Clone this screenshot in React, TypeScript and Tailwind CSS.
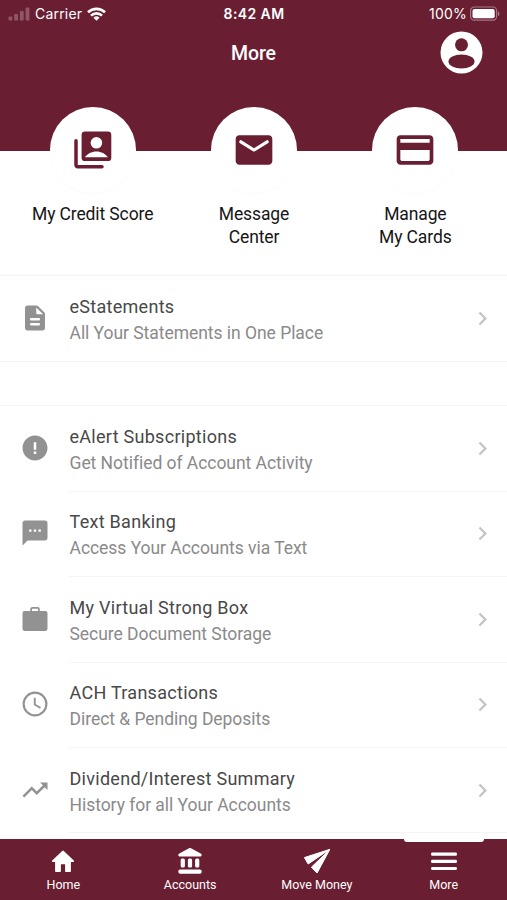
import type { ReactNode } from "react";

interface Shortcut {
  label: string[];
  icon: ReactNode;
}

interface MenuItem {
  title: string;
  subtitle: string;
  icon: ReactNode;
}

interface Tab {
  label: string;
  icon: ReactNode;
  active?: boolean;
}

const shortcuts: Shortcut[] = [
  {
    label: ["My Credit Score"],
    icon: (
      <svg width="44" height="44" viewBox="0 0 44 44" fill="currentColor">
        <path
          fillRule="evenodd"
          d="M14 3.500h22.900a3.400 3.400 0 0 1 3.400 3.400v22.800a3.400 3.400 0 0 1-3.400 3.400H14a3.400 3.400 0 0 1-3.400-3.400V6.900A3.400 3.400 0 0 1 14 3.500zM25.400 9a5.800 5.800 0 1 0 0 11.600 5.800 5.800 0 0 0 0-11.600zM14 29.300h22.800c-2.200-3.700-6.600-5.900-11.400-5.900s-9.200 2.200-11.400 5.900z"
        />
        <path
          d="M5 12.800v24.300a1.700 1.700 0 0 0 1.700 1.700H31"
          fill="none"
          stroke="currentColor"
          strokeWidth="3.500"
          strokeLinecap="round"
        />
      </svg>
    ),
  },
  {
    label: ["Message", "Center"],
    icon: (
      <svg width="44" height="44" viewBox="0 0 24 24" fill="currentColor">
        <path d="M20 4H4c-1.100 0-1.990.9-1.990 2L2 18c0 1.100.9 2 2 2h16c1.100 0 2-.9 2-2V6c0-1.100-.9-2-2-2zm-.4 4.250l-7.070 4.420c-.320.200-.740.200-1.060 0L4.400 8.250a.850.850 0 1 1 .9-1.440L12 11l6.700-4.190a.850.850 0 1 1 .9 1.440z" />
      </svg>
    ),
  },
  {
    label: ["Manage", "My Cards"],
    icon: (
      <svg width="44" height="44" viewBox="0 0 24 24" fill="currentColor">
        <path d="M20 4H4c-1.110 0-1.990.890-1.990 2L2 18c0 1.110.890 2 2 2h16c1.110 0 2-.890 2-2V6c0-1.110-.890-2-2-2zm-1 14H5c-.550 0-1-.450-1-1v-5h16v5c0 .550-.450 1-1 1zm1-10H4V6h16v2z" />
      </svg>
    ),
  },
];

const GlyphIcon = ({ d, size = 30 }: { d: string; size?: number }) => (
  <svg width={size} height={size} viewBox="0 0 24 24" fill="currentColor">
    <path d={d} />
  </svg>
);

const statements: MenuItem[] = [
  {
    title: "eStatements",
    subtitle: "All Your Statements in One Place",
    icon: (
      <GlyphIcon d="M14.590 2.590c-.380-.380-.890-.590-1.420-.590H6c-1.100 0-2 .9-2 2v16c0 1.100.890 2 1.990 2H18c1.100 0 2-.9 2-2V8.830c0-.530-.210-1.040-.590-1.410l-4.820-4.830zM15 18H9c-.550 0-1-.450-1-1s.450-1 1-1h6c.550 0 1 .450 1 1s-.450 1-1 1zm0-4H9c-.550 0-1-.450-1-1s.450-1 1-1h6c.550 0 1 .450 1 1s-.450 1-1 1zm-2-6V3.500L18.500 9H14c-.550 0-1-.450-1-1z" />
    ),
  },
];

const services: MenuItem[] = [
  {
    title: "eAlert Subscriptions",
    subtitle: "Get Notified of Account Activity",
    icon: (
      <GlyphIcon d="M12 2C6.480 2 2 6.480 2 12s4.480 10 10 10 10-4.480 10-10S17.520 2 12 2zm1 14.700h-2v-2h2v2zm0-3.300h-2V7.300h2v6.100z" />
    ),
  },
  {
    title: "Text Banking",
    subtitle: "Access Your Accounts via Text",
    icon: (
      <GlyphIcon d="M20 2H4c-1.100 0-2 .9-2 2v18l4-4h14c1.100 0 2-.9 2-2V4c0-1.100-.9-2-2-2zM9.200 11H7.300V9.100h1.900V11zm3.750 0h-1.900V9.100h1.900V11zm3.750 0h-1.900V9.100h1.900V11z" />
    ),
  },
  {
    title: "My Virtual Strong Box",
    subtitle: "Secure Document Storage",
    icon: (
      <GlyphIcon d="M20.300 5.600h-4.500V4.200c0-1.100-.7-1.800-1.700-1.800H9.900c-1 0-1.700.7-1.700 1.800v1.400H3.700c-1 0-1.700.7-1.700 1.700v12.500c0 1 .7 1.700 1.700 1.700h16.600c1 0 1.700-.7 1.700-1.700V7.300c0-1-.7-1.700-1.700-1.700zm-5.900 0H9.600V4.300c0-.3.200-.5.500-.5h3.800c.3 0 .5.200.5.500v1.300z" />
    ),
  },
  {
    title: "ACH Transactions",
    subtitle: "Direct & Pending Deposits",
    icon: (
      <svg width="30" height="30" viewBox="0 0 24 24" fill="none" stroke="currentColor" strokeWidth="1.700">
        <circle cx="12" cy="12" r="9.100" />
        <path d="M11.800 7v5.400l4.600 2.800" strokeWidth="1.500" />
      </svg>
    ),
  },
  {
    title: "Dividend/Interest Summary",
    subtitle: "History for all Your Accounts",
    icon: (
      <GlyphIcon d="M16 6l2.290 2.290-4.880 4.880-4-4L2 16.590 3.410 18l6-6 4 4 6.300-6.290L22 12V6z" />
    ),
  },
];

const tabs: Tab[] = [
  {
    label: "Home",
    icon: (
      <svg width="28" height="28" viewBox="0 0 28 28" fill="currentColor">
        <path d="M11.900 24v-6.800h4.200V24c0 .6.400 1 1 1h3.800c.6 0 1-.4 1-1v-9h2.300c.8 0 1.200-1 .6-1.500L14.800 3.900a1.200 1.200 0 0 0-1.600 0L3.200 13.500c-.6.500-.2 1.500.6 1.500h2.300v9c0 .6.400 1 1 1h3.800c.6 0 1-.4 1-1z" />
      </svg>
    ),
  },
  {
    label: "Accounts",
    icon: (
      <svg width="28" height="28" viewBox="0 0 28 28" fill="currentColor">
        <path d="M13 1.300L3.300 6.400c-1.700.9-1.100 3.100.8 3.100h19.800c1.900 0 2.500-2.200.8-3.100L15 1.300a2.200 2.200 0 0 0-2 0z" />
        <rect x="4.700" y="11.500" width="4.200" height="9" rx="1.500" />
        <rect x="11.900" y="11.500" width="4.200" height="9" rx="1.500" />
        <rect x="19.100" y="11.500" width="4.200" height="9" rx="1.500" />
        <rect x="2.300" y="22.500" width="23.400" height="4.200" rx="1.900" />
      </svg>
    ),
  },
  {
    label: "Move Money",
    icon: (
      <svg width="28" height="28" viewBox="0 0 28 28" fill="currentColor" stroke="currentColor" strokeWidth="1" strokeLinejoin="round">
        <path d="M1.400 10.600L26.600 2.400 5.200 17z" />
        <path d="M26.700 2.600L8.400 20.200l5.700 5.800z" />
      </svg>
    ),
  },
  {
    label: "More",
    active: true,
    icon: (
      <svg width="28" height="28" viewBox="0 0 28 28" fill="currentColor">
        <rect x="1.100" y="5.500" width="25.800" height="3.200" rx="1" />
        <rect x="1.100" y="12.700" width="25.800" height="3.200" rx="1" />
        <rect x="1.100" y="19.900" width="25.800" height="3.200" rx="1" />
      </svg>
    ),
  },
];

const StatusBar = () => (
  <div className="grid h-[28px] grid-cols-3 items-center pl-[8px] pr-[7px] font-['Inter',sans-serif] text-[14px] leading-none">
    <div className="flex items-center">
      <svg width="22" height="14" viewBox="0 0 22 14" fill="currentColor" className="opacity-25">
        <rect x="0.500" y="9.500" width="3.800" height="4" rx="1" />
        <rect x="6.200" y="7" width="3.800" height="6.500" rx="1" />
        <rect x="11.900" y="4" width="3.800" height="9.500" rx="1" />
        <rect x="17.600" y="0.500" width="3.800" height="13" rx="1" />
      </svg>
      <span className="ml-[5px] tracking-[0.2px]">Carrier</span>
      <svg width="19" height="14" viewBox="0 0 19 14" fill="none" stroke="currentColor" strokeWidth="2.600" className="ml-[5px]">
        <path d="M1 5.300a12.200 12.200 0 0 1 17 0" />
        <path d="M4 8.600a7.900 7.900 0 0 1 11 0" />
        <path d="M9.500 13.700L6.500 10.700a4.300 4.300 0 0 1 6 0z" fill="currentColor" stroke="none" />
      </svg>
    </div>
    <span className="text-center font-semibold tracking-[0.4px]">8:42 AM</span>
    <div className="flex items-center justify-end">
      <span className="tracking-[0.2px]">100%</span>
      <svg width="30" height="16" viewBox="0 0 30 16" className="ml-[3px]">
        <rect x="0.600" y="1" width="26" height="13.200" rx="3.600" fill="none" stroke="currentColor" strokeOpacity="0.400" strokeWidth="1.200" />
        <rect x="2.500" y="2.900" width="22.200" height="9.400" rx="2" fill="currentColor" />
        <path d="M28 5.400v4.600c1.800-.7 1.800-3.900 0-4.600z" fill="currentColor" fillOpacity="0.450" />
      </svg>
    </div>
  </div>
);

const MenuRow = ({ item, divider }: { item: MenuItem; divider: boolean }) => (
  <li className="flex h-[85.4px] items-stretch pl-[20px]">
    <span className="flex w-[30px] items-center pb-[2px] text-[#929292]">{item.icon}</span>
    <div className={`ml-[19px] flex flex-1 items-center justify-between pr-[11px] ${divider ? "border-b border-[#f5f5f5]" : ""}`}>
      <div className="pt-[3px] pl-[0.5px] leading-[26px]">
        <p className="text-[18px] tracking-[0.28px] text-[#484848]">{item.title}</p>
        <p className="text-[17.5px] tracking-[-0.04px] text-[#8a8a8a]">{item.subtitle}</p>
      </div>
      <span className="text-[#c4c4c4]">
        <GlyphIcon size={27} d="M8.590 16.590L13.170 12 8.590 7.410 10 6l6 6-6 6-1.410-1.410z" />
      </span>
    </div>
  </li>
);

const App = () => {
  return (
    <div className="flex h-[900px] w-[507px] flex-col overflow-hidden bg-white font-['Roboto',sans-serif]">
      <header className="h-[151px] shrink-0 bg-[#6a1e32] text-white">
        <StatusBar />
        <div className="grid h-[49px] grid-cols-3 items-center pr-[24px] pl-[24px]">
          <h1 className="col-start-2 pt-[2px] text-center text-[19.5px] font-medium tracking-[-0.1px]">More</h1>
          <svg width="43" height="43" viewBox="0 0 43 43" className="justify-self-end">
            <circle cx="21.500" cy="21.500" r="21" fill="white" />
            <circle cx="21.500" cy="13.800" r="6.500" fill="#6a1e32" />
            <ellipse cx="21.500" cy="30.500" rx="13" ry="7" fill="#6a1e32" />
          </svg>
        </div>
      </header>

      <section className="-mt-[44px] grid h-[168px] shrink-0 grid-cols-3 pl-[12px] pr-[11px]">
        {shortcuts.map((shortcut) => (
          <button key={shortcut.label[0]} className="flex flex-col items-center">
            <span className="flex size-[86px] items-center justify-center rounded-full bg-white text-[#6a1e32] shadow-[0_1px_3px_rgba(0,0,0,0.02)]">
              {shortcut.icon}
            </span>
            <span className="mt-[10px] text-[17.5px] leading-[23px] tracking-[-0.12px] text-[#161616]">
              {shortcut.label.map((line) => (
                <span key={line} className="block">{line}</span>
              ))}
            </span>
          </button>
        ))}
      </section>

      <ul className="shrink-0 border-y border-[#f3f3f3]">
        {statements.map((item) => (
          <MenuRow key={item.title} item={item} divider={false} />
        ))}
      </ul>

      <ul className="mt-[43px] min-h-0 flex-1 overflow-hidden border-t border-[#f3f3f3]">
        {services.map((item) => (
          <MenuRow key={item.title} item={item} divider />
        ))}
      </ul>

      <nav className="grid h-[61px] shrink-0 grid-cols-4 bg-[#6a1e32] text-white">
        {tabs.map((tab) => (
          <button key={tab.label} className="relative flex flex-col items-center pt-[8px]">
            {tab.active && (
              <span className="absolute top-0 h-[3px] w-[80px] rounded-b-[3px] bg-white" />
            )}
            {tab.icon}
            <span className="mt-[1px] text-[12.5px] leading-[17px]">{tab.label}</span>
          </button>
        ))}
      </nav>
    </div>
  );
};

export default App;
